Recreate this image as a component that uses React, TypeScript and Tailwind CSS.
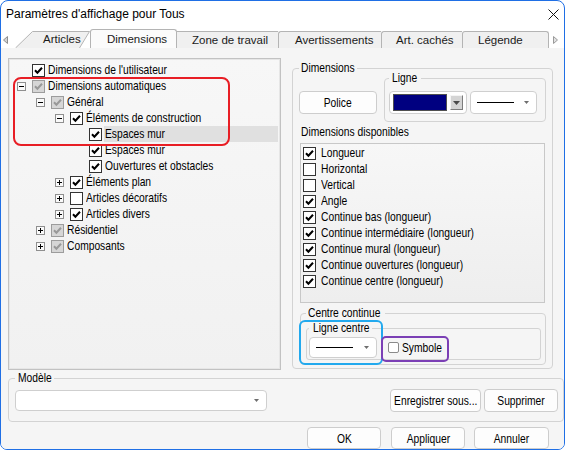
import React from 'react';

type CheckState = 'on' | 'off' | 'gray';

interface TreeItem {
  level: number;
  exp: 'open' | 'closed' | null;
  state: CheckState;
  label: string;
  selected?: boolean;
}

const TREE: TreeItem[] = [
  { level: 0, exp: null, state: 'on', label: "Dimensions de l'utilisateur" },
  { level: 0, exp: 'open', state: 'gray', label: 'Dimensions automatiques' },
  { level: 1, exp: 'open', state: 'gray', label: 'Général' },
  { level: 2, exp: 'open', state: 'on', label: 'Éléments de construction' },
  { level: 3, exp: null, state: 'on', label: 'Espaces mur', selected: true },
  { level: 3, exp: null, state: 'on', label: 'Espaces mur' },
  { level: 3, exp: null, state: 'on', label: 'Ouvertures et obstacles' },
  { level: 2, exp: 'closed', state: 'on', label: 'Éléments plan' },
  { level: 2, exp: 'closed', state: 'off', label: 'Articles décoratifs' },
  { level: 2, exp: 'closed', state: 'on', label: 'Articles divers' },
  { level: 1, exp: 'closed', state: 'gray', label: 'Résidentiel' },
  { level: 1, exp: 'closed', state: 'gray', label: 'Composants' },
];

const INDENT = ['pl-[8px]', 'pl-[27px]', 'pl-[46px]', 'pl-[65px]'];

const AVAILABLE: { label: string; on: boolean }[] = [
  { label: 'Longueur', on: true },
  { label: 'Horizontal', on: false },
  { label: 'Vertical', on: false },
  { label: 'Angle', on: true },
  { label: 'Continue bas (longueur)', on: true },
  { label: 'Continue intermédiaire (longueur)', on: true },
  { label: 'Continue mural (longueur)', on: true },
  { label: 'Continue ouvertures (longueur)', on: true },
  { label: 'Continue centre (longueur)', on: true },
];

// The dialog font is a narrow sans; squeeze Liberation Sans to match its width
const N = ({ children, center }: { children: React.ReactNode; center?: boolean }) => (
  <span className={`inline-block whitespace-nowrap scale-x-[0.79] ${center ? '' : 'origin-left'}`}>{children}</span>
);

const Check = ({ state }: { state: CheckState }) => (
  <span
    className={`w-[13px] h-[13px] shrink-0 border flex items-center justify-center ${
      state === 'gray' ? 'border-[#9c9c9c] bg-[#d6d6d6]' : 'border-[#333333] bg-white'
    }`}
  >
    {state !== 'off' && (
      <svg width="11" height="11" viewBox="0 0 11 11">
        <path d="M2 5.3 L4.4 7.8 L9 2.8" fill="none" stroke={state === 'gray' ? '#999999' : '#000000'} strokeWidth="2" />
      </svg>
    )}
  </span>
);

const Expander = ({ open }: { open: boolean }) => (
  <svg width="9" height="9" viewBox="0 0 9 9" className="shrink-0">
    <rect x="0.5" y="0.5" width="8" height="8" fill="#fafafa" stroke="#8f8f8f" />
    <path d="M2 4.5 H7" stroke="#000" />
    {!open && <path d="M4.5 2 V7" stroke="#000" />}
  </svg>
);

const ComboArrow = () => (
  <svg width="5" height="3" viewBox="0 0 5 3">
    <path d="M0 0 H5 L2.5 3 Z" fill="#6e6e6e" />
  </svg>
);

const LineCombo = ({ w, lineW }: { w: string; lineW: string }) => (
  <div className={`${w} h-full rounded-[4px] border border-[#cfcfcf] bg-white flex items-center pl-[6px] pr-[7px]`}>
    <div className={`${lineW} h-px bg-black`} />
    <div className="flex-1" />
    <ComboArrow />
  </div>
);

const Button = ({ label, className }: { label: string; className: string }) => (
  <button className={`${className} rounded-[4px] border border-[#cdcdcd] bg-[#fdfdfd] text-[13px] text-black leading-none flex items-center justify-center`}>
    <N center>{label}</N>
  </button>
);

export default function App() {
  return (
    <div className="relative w-[565px] h-[450px] border border-[#1f6fe5] rounded-t-[8px] rounded-b-[7px] overflow-hidden bg-white flex flex-col font-['Liberation_Sans',sans-serif]">
      {/* Title bar */}
      <div className="h-[28px] shrink-0 flex items-center justify-between pl-[5px] pr-[5px] pb-[2px] text-[12px] text-black">
        <span>Paramètres d'affichage pour Tous</span>
        <svg width="11" height="11" viewBox="0 0 11 11">
          <path d="M0.5 0.5 L10.5 10.5 M10.5 0.5 L0.5 10.5" stroke="#111" strokeWidth="1" />
        </svg>
      </div>

      {/* Tabs */}
      <div className="h-[19px] shrink-0 flex items-end text-[11.5px] text-[#1a1a1a]">
        <div className="w-[14px] h-[17px] flex items-center pl-[2px]">
          <svg width="5" height="8" viewBox="0 0 5 8">
            <path d="M4.5 0.5 V7.5 L0.5 4 Z" fill="#d2d2d2" stroke="#8f8f8f" strokeWidth="1" />
          </svg>
        </div>
        <div className="relative w-[75px] h-[17px]">
          <svg className="absolute inset-0" width="75" height="17" viewBox="0 0 75 17">
            <path d="M0.5 17 L17.5 0.5 L74.5 0.5 L64.5 17" fill="#f0f0f0" stroke="#b4b4b4" />
          </svg>
          <span className="relative block pl-[28px] leading-[17px]">Articles</span>
        </div>
        <div className="w-[87px] h-[19px] bg-[#fbfbfb] border-l border-t border-r border-[#b4b4b4] rounded-t-[3px] pl-[16px] leading-[18px]">
          Dimensions
        </div>
        <div className="w-[101px] h-[17px] bg-[#f0f0f0] border-t border-[#b4b4b4] pl-[15px] leading-[16px]">
          Zone de travail
        </div>
        <div className="w-[103px] h-[17px] bg-[#f0f0f0] border-l border-t border-[#b4b4b4] rounded-tl-[3px] pl-[16px] leading-[16px]">
          Avertissements
        </div>
        <div className="w-[81px] h-[17px] bg-[#f0f0f0] border-l border-t border-[#b4b4b4] rounded-tl-[3px] pl-[14px] leading-[16px]">
          Art. cachés
        </div>
        <div className="w-[87px] h-[17px] bg-[#f0f0f0] border-l border-t border-r border-[#b4b4b4] rounded-t-[3px] pl-[15px] leading-[16px]">
          Légende
        </div>
        <div className="flex-1 h-[17px] flex items-center pl-[4px]">
          <svg width="5" height="8" viewBox="0 0 5 8">
            <path d="M0.5 0.5 V7.5 L4.5 4 Z" fill="#e2e2e2" stroke="#9a9a9a" strokeWidth="1" />
          </svg>
        </div>
      </div>

      {/* Page */}
      <div className="flex-1 bg-[#f5f5f5] flex flex-col pl-[7px] pt-[10px] text-[13px] text-black">
        <div className="flex items-start">
          {/* Tree */}
          <div className="w-[273px] h-[312px] border border-[#c2c2c2] shadow-[inset_0_0_0_1px_#e6e6e6] bg-linear-to-b from-[#f7f7f7] to-[#f1f1f1] pt-[3px] pr-[2px]">
            {TREE.map((item, i) => (
              <div key={i} className={`h-[16px] flex items-center ${INDENT[item.level]}`}>
                <span className="w-[9px] h-[9px] shrink-0 flex">
                  {item.exp && <Expander open={item.exp === 'open'} />}
                </span>
                <span className="ml-[6px] flex">
                  <Check state={item.state} />
                </span>
                <span className={`ml-[2px] pl-[1px] h-[16px] leading-[16px] ${item.selected ? 'flex-1 bg-[#e0e0e0]' : ''}`}>
                  <N>{item.label}</N>
                </span>
              </div>
            ))}
          </div>

          {/* Dimensions group */}
          <fieldset className="ml-[11px] mt-[5px] w-[261px] h-[306px] border border-[#d3d3d3] rounded-[4px] pl-[6px] pr-[6px]">
            <legend className="w-[58px] pl-[2px] leading-[10px]">
              <N>Dimensions</N>
            </legend>
            <div className="flex items-start">
              <Button label="Police" className="mt-[18px] w-[78px] h-[23px]" />
              <fieldset className="ml-[7px] w-[162px] h-[49px] border border-[#d3d3d3] rounded-[4px] pl-[4px]">
                <legend className="w-[32px] pl-[3px] leading-[10px]">
                  <N>Ligne</N>
                </legend>
                <div className="mt-[8px] h-[23px] flex">
                  <div className="w-[78px] h-full rounded-[4px] border border-[#cfcfcf] bg-white flex items-center pl-[3px]">
                    <div className="w-[54px] h-[17px] border border-[#505050] bg-[#000080]" />
                    <div className="ml-[3px] w-[13px] h-[15px] bg-[#d4d4d4] border border-t-[#f4f4f4] border-l-[#f4f4f4] border-r-[#7c7c7c] border-b-[#7c7c7c] flex items-center justify-center">
                      <svg width="7" height="4" viewBox="0 0 7 4">
                        <path d="M0 0 H7 L3.5 4 Z" fill="#4a4a4a" />
                      </svg>
                    </div>
                  </div>
                  <div className="ml-[3px] h-full">
                    <LineCombo w="w-[67px]" lineW="w-[37px]" />
                  </div>
                </div>
              </fieldset>
            </div>

            <div className="mt-[3px] ml-[2px] h-[14px] leading-[14px]">
              <N>Dimensions disponibles</N>
            </div>

            <div className="mt-[4px] ml-[1px] w-[245px] h-[160px] border border-[#c8c8c8] bg-linear-to-b from-[#f7f7f7] to-[#eeeeee] pt-[1px] pl-[2px]">
              {AVAILABLE.map((a) => (
                <div key={a.label} className="h-[16px] flex items-center">
                  <Check state={a.on ? 'on' : 'off'} />
                  <span className="ml-[5px] h-[16px] leading-[16px]">
                    <N>{a.label}</N>
                  </span>
                </div>
              ))}
            </div>

            <fieldset className="mt-[5px] ml-[1px] w-[246px] h-[57px] border border-[#d3d3d3] rounded-[4px] pl-[5px]">
              <legend className="w-[79px] pl-[2px] leading-[10px]">
                <N>Centre continue</N>
              </legend>
              <fieldset className="mt-[5px] w-[235px] h-[37px] border border-[#d3d3d3] rounded-[3px] pl-[2px]">
                <legend className="w-[63px] pl-[4px] leading-[10px]">
                  <N>Ligne centre</N>
                </legend>
                <div className="mt-[4px] h-[21px] flex items-center">
                  <LineCombo w="w-[68px]" lineW="w-[37px]" />
                  <span className="ml-[11px] w-[11px] h-[11px] rounded-[2px] border border-[#8a8a8a] bg-white shrink-0" />
                  <span className="ml-[3px] h-[14px] leading-[14px]">
                    <N>Symbole</N>
                  </span>
                </div>
              </fieldset>
            </fieldset>
          </fieldset>
        </div>

        {/* Modèle */}
        <fieldset className="mt-[3px] w-[556px] h-[49px] border border-[#d3d3d3] rounded-[4px] pl-[6px]">
          <legend className="w-[39px] pl-[3px] leading-[10px]">
            <N>Modèle</N>
          </legend>
          <div className="mt-[6px] flex items-center">
            <div className="w-[252px] h-[21px] rounded-[4px] border border-[#cfcfcf] bg-white flex items-center justify-end pr-[7px]">
              <ComboArrow />
            </div>
            <Button label="Enregistrer sous..." className="ml-[123px] w-[91px] h-[23px]" />
            <Button label="Supprimer" className="ml-[3px] w-[74px] h-[23px]" />
          </div>
        </fieldset>

        {/* Dialog buttons */}
        <div className="mt-[5px] flex justify-end pr-[15px]">
          <Button label="OK" className="w-[74px] h-[22px]" />
          <Button label="Appliquer" className="ml-[10px] w-[74px] h-[22px]" />
          <Button label="Annuler" className="ml-[9px] w-[75px] h-[22px]" />
        </div>
      </div>

      {/* Annotation highlights */}
      <div className="absolute left-[12px] top-[76px] w-[217px] h-[69px] border-2 border-[#e81e25] rounded-[8px] pointer-events-none" />
      <div className="absolute left-[298px] top-[319px] w-[84px] h-[45px] border-2 border-[#22a9ee] rounded-[6px] pointer-events-none" />
      <div className="absolute left-[380px] top-[335px] w-[68px] h-[26px] border-2 border-[#7b3fb5] rounded-[5px] pointer-events-none" />
    </div>
  );
}
